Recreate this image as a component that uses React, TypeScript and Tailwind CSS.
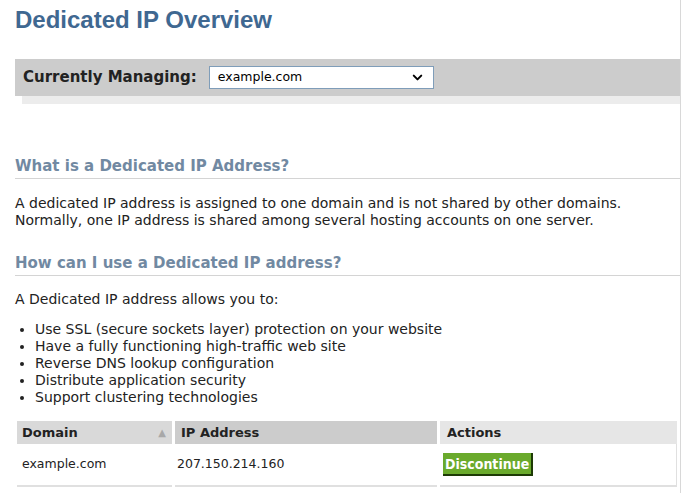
import { ChevronDown } from 'lucide-react';

const uses = [
  'Use SSL (secure sockets layer) protection on your website',
  'Have a fully functioning high-traffic web site',
  'Reverse DNS lookup configuration',
  'Distribute application security',
  'Support clustering technologies',
];

function SectionHeading({ children }: { children: string }) {
  return (
    <h2 className="border-b border-[#d4d4d4] pb-[3px] text-[15px] font-bold leading-[18px] text-[#7189a2]">
      {children}
    </h2>
  );
}

export default function App() {
  return (
    <div className="h-[493px] w-[682px] overflow-hidden bg-white font-['DejaVu_Sans',sans-serif] text-[14px] text-[#222]">
      <div className="h-full w-[681px] border-r border-[#d8d8d8] pl-[15px]">
        {/* Title */}
        <h1 className="pt-[6px] font-['Liberation_Sans',Arial,sans-serif] text-[24px] font-bold leading-[28px] text-[#3f6891]">
          Dedicated IP Overview
        </h1>

        {/* Domain selector */}
        <div className="mt-[25px]">
          <div className="flex h-[37px] items-center bg-[#cccccc] pl-[8px]">
            <span className="text-[15px] font-bold text-[#222]">Currently Managing:</span>
            <div className="ml-[12px] flex h-[23px] w-[225px] items-center justify-between border border-[#7f9db9] bg-white pl-[8px] pr-[8px]">
              <span className="text-[12.5px] text-black">example.com</span>
              <ChevronDown size={15} strokeWidth={3.2} className="text-black" />
            </div>
          </div>
          <div className="ml-[7px] h-[8px] bg-[#ececec]" />
        </div>

        {/* What is */}
        <div className="mt-[53px]">
          <SectionHeading>What is a Dedicated IP Address?</SectionHeading>
          <p className="mt-[16px] leading-[17px]">
            A dedicated IP address is assigned to one domain and is not shared by other domains.
            <br />
            Normally, one IP address is shared among several hosting accounts on one server.
          </p>
        </div>

        {/* How to use */}
        <div className="mt-[25px]">
          <SectionHeading>How can I use a Dedicated IP address?</SectionHeading>
          <p className="mt-[15px] leading-[17px]">A Dedicated IP address allows you to:</p>
          <ul className="mt-[13px] list-disc pl-[20px] leading-[17px]">
            {uses.map((u) => (
              <li key={u}>{u}</li>
            ))}
          </ul>
        </div>

        {/* Table */}
        <table className="mt-[15px] -ml-[1px] w-[666px] border-separate border-spacing-x-[3px] border-spacing-y-0">
          <thead>
            <tr className="h-[23px] text-left text-[13px] font-bold">
              <th className="w-[155px] bg-[#d9d9d9] pl-[5px]">
                <div className="flex items-center justify-between pr-[6px]">
                  <span>Domain</span>
                  <span className="text-[10px] text-[#a8a8a8]">▲</span>
                </div>
              </th>
              <th className="w-[262px] bg-[#cccccc] pl-[6px]">IP Address</th>
              <th className="bg-[#e6e6e6] pl-[7px]">Actions</th>
            </tr>
          </thead>
          <tbody>
            <tr className="h-[43px] text-[12.5px]">
              <td className="border-b-2 border-[#e0e0e0] pl-[5px]">example.com</td>
              <td className="border-b-2 border-[#e0e0e0] pl-[2px]">207.150.214.160</td>
              <td className="border-b-2 border-r border-[#e0e0e0] pl-[3px]">
                <button className="h-[23px] border-b-2 border-r-2 border-[#1d3a05] bg-[#6aaa2c] px-[2px] font-['Liberation_Sans_Narrow','DejaVu_Sans_Condensed',sans-serif] text-[14px] font-bold leading-[20px] text-white">
                  Discontinue
                </button>
              </td>
            </tr>
          </tbody>
        </table>
      </div>
    </div>
  );
}
